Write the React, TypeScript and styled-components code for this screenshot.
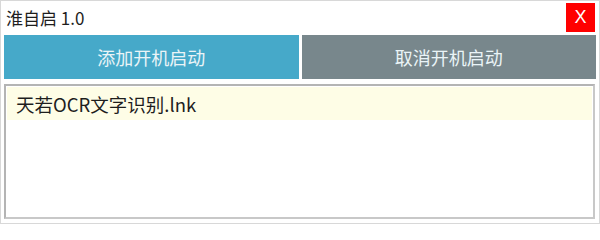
import React from "react";
import styled, { createGlobalStyle } from "styled-components";

const Global = createGlobalStyle`
  html, body { margin: 0; padding: 0; background: #ffffff; }
  * { box-sizing: border-box; }
`;

const FONT = `"Noto Sans CJK SC", "Noto Sans", sans-serif`;

const Window = styled.div`
  width: 600px;
  height: 224px;
  border: 1px solid #d8d8d8;
  background: #ffffff;
  display: flex;
  flex-direction: column;
  font-family: ${FONT};
`;

const TitleBar = styled.div`
  height: 34px;
  display: flex;
  align-items: flex-start;
  justify-content: space-between;
  padding: 2px 4px 0 5px;
`;

const Title = styled.div`
  font-size: 17px;
  line-height: 30px;
  color: #1e1e1e;
`;

const CloseButton = styled.button`
  width: 29px;
  height: 29px;
  border: none;
  margin: 0;
  padding: 0;
  background: #ff0000;
  color: #ffffff;
  font-family: "Liberation Sans", sans-serif;
  font-size: 18px;
  line-height: 29px;
  text-align: center;
`;

const ButtonRow = styled.div`
  display: flex;
  gap: 3px;
  padding: 0 3px 0 3px;
  height: 44px;
`;

const ActionButton = styled.button<{ $tone: "blue" | "gray" }>`
  flex: 1;
  border: none;
  margin: 0;
  padding: 0;
  background: ${(p) => (p.$tone === "blue" ? "#46a9c9" : "#78878c")};
  color: #eaf4f7;
  font-family: ${FONT};
  font-size: 18px;
  text-align: center;
`;

const ListBox = styled.div`
  margin: 5px 4px 4px 3px;
  flex: 1;
  border: 2px solid #b4b4b4;
  border-right-color: #c8c8c8;
  border-bottom-color: #c8c8c8;
  background: #ffffff;
  padding: 1px;
`;

const ListItem = styled.div<{ $selected?: boolean }>`
  height: 33px;
  display: flex;
  align-items: center;
  padding-left: 9px;
  background: ${(p) => (p.$selected ? "#fefde6" : "transparent")};
  font-size: 18.5px;
  color: #1e1e1e;
`;

export default function App() {
  return (
    <>
      <Global />
      <Window>
        <TitleBar>
          <Title>淮自启 1.0</Title>
          <CloseButton>X</CloseButton>
        </TitleBar>
        <ButtonRow>
          <ActionButton $tone="blue">添加开机启动</ActionButton>
          <ActionButton $tone="gray">取消开机启动</ActionButton>
        </ButtonRow>
        <ListBox>
          <ListItem $selected>天若OCR文字识别.lnk</ListItem>
        </ListBox>
      </Window>
    </>
  );
}
